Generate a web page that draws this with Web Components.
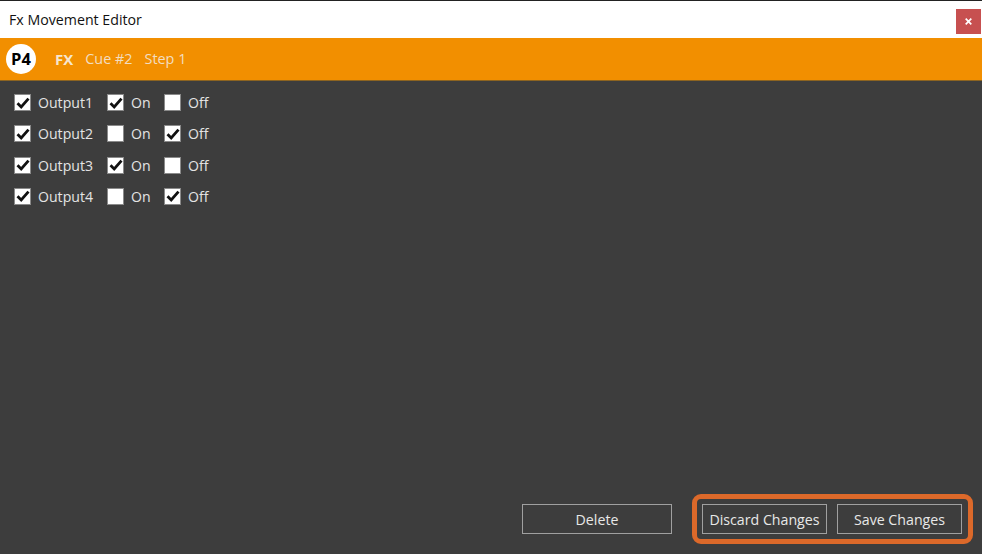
<!DOCTYPE html>
<html>
<head>
<meta charset="utf-8">
<title>Fx Movement Editor</title>
<style>
  html, body { margin: 0; height: 100%; overflow: hidden; }
  body { font-family: "Open Sans", "Noto Sans", sans-serif; font-size: 14.2px; }
</style>
</head>
<body>
<fx-window>
  <title-bar slot="title">Fx Movement Editor</title-bar>
  <crumb-bar slot="crumbs" badge="P4">
    <b>FX</b><span>Cue #2</span><span>Step 1</span>
  </crumb-bar>
  <output-row name="Output1" on></output-row>
  <output-row name="Output2"></output-row>
  <output-row name="Output3" on></output-row>
  <output-row name="Output4"></output-row>
  <flat-button slot="actions" style="--w:150px">Delete</flat-button>
  <mark-box slot="actions">
    <flat-button style="--w:125px">Discard Changes</flat-button>
    <flat-button style="--w:125px">Save Changes</flat-button>
  </mark-box>
</fx-window>

<script>
class FxWindow extends HTMLElement {
  constructor() {
    super();
    this.attachShadow({ mode: 'open' }).innerHTML = `
      <style>
        :host {
          display: flex;
          flex-direction: column;
          height: 554px;
          background: #3d3d3d;
        }
        .rows {
          flex: 1;
          display: flex;
          flex-direction: column;
          gap: 9.33px;
          padding: 10.5px 0 0 14px;
        }
        .actions {
          display: flex;
          justify-content: flex-end;
          align-items: center;
          gap: 20px;
          padding: 0 9px 10px 0;
        }
      </style>
      <slot name="title"></slot>
      <slot name="crumbs"></slot>
      <div class="rows"><slot></slot></div>
      <div class="actions"><slot name="actions"></slot></div>
    `;
  }
}

class TitleBar extends HTMLElement {
  constructor() {
    super();
    this.attachShadow({ mode: 'open' }).innerHTML = `
      <style>
        :host {
          display: flex;
          align-items: center;
          justify-content: space-between;
          box-sizing: border-box;
          height: 38px;
          padding: 0 1px 0 9px;
          background: #fff;
          border-top: 1px solid #222;
          color: #111;
          font-size: 14.2px;
        }
        .close {
          display: flex;
          align-items: center;
          justify-content: center;
          width: 25px;
          height: 25px;
          margin-top: 4px;
          background: #c75050;
        }
      </style>
      <span><slot></slot></span>
      <div class="close">
        <svg width="7" height="7" viewBox="0 0 7 7"><path d="M.7.7l5.6 5.6M6.3.7L.7 6.300" stroke="#fff" stroke-width="1.700" fill="none"/></svg>
      </div>
    `;
  }
}

class CrumbBar extends HTMLElement {
  constructor() {
    super();
    this.attachShadow({ mode: 'open' }).innerHTML = `
      <style>
        :host {
          display: flex;
          align-items: center;
          box-sizing: border-box;
          height: 43px;
          padding: 0 0 1px 6px;
          background: #f28f00;
          border-bottom: 1px solid #8d6420;
          color: #f2ddc0;
          font-size: 14.4px;
        }
        .badge {
          display: flex;
          align-items: center;
          justify-content: center;
          width: 30px;
          height: 30px;
          margin-right: 19px;
          border-radius: 50%;
          background: #fff;
          color: #000;
          font-weight: 700;
          font-size: 16.500px;
        }
        .crumbs { display: flex; gap: 12px; padding-top: 1px; }
        ::slotted(b) { color: #f6e6d0; font-size: 15px; line-height: 20px; }
      </style>
      <div class="badge">${this.getAttribute('badge')}</div>
      <div class="crumbs"><slot></slot></div>
    `;
  }
}

class CheckItem extends HTMLElement {
  constructor() {
    super();
    const tick = this.hasAttribute('checked')
      ? '<svg width="14" height="14" viewBox="0 0 14 14"><path d="M1.500 7.200l3.700 3.700L12.500 2.600" stroke="#111" stroke-width="2.800" fill="none"/></svg>'
      : '';
    this.attachShadow({ mode: 'open' }).innerHTML = `
      <style>
        :host {
          display: flex;
          align-items: center;
          gap: 7px;
          color: #e4e4e4;
          font-size: 14.1px;
          width: var(--w);
        }
        .box {
          display: flex;
          align-items: center;
          justify-content: center;
          box-sizing: border-box;
          flex: none;
          width: 17px;
          height: 17px;
          background: #fff;
          border: 1.500px solid #8a8a8a;
        }
      </style>
      <div class="box">${tick}</div>
      <span><slot></slot></span>
    `;
  }
}

class OutputRow extends HTMLElement {
  constructor() {
    super();
    const on = this.hasAttribute('on');
    this.attachShadow({ mode: 'open' }).innerHTML = `
      <style>
        :host { display: flex; align-items: center; height: 22px; }
      </style>
      <check-item checked style="--w:93px">${this.getAttribute('name')}</check-item>
      <check-item ${on ? 'checked' : ''} style="--w:57px">On</check-item>
      <check-item ${on ? '' : 'checked'} style="--w:60px">Off</check-item>
    `;
  }
}

class FlatButton extends HTMLElement {
  constructor() {
    super();
    this.attachShadow({ mode: 'open' }).innerHTML = `
      <style>
        :host {
          display: flex;
          align-items: center;
          justify-content: center;
          box-sizing: border-box;
          width: var(--w);
          height: 30px;
          border: 1px solid #a0a0a0;
          color: #e8e8e8;
          font-size: 14.2px;
        }
      </style>
      <slot></slot>
    `;
  }
}

class MarkBox extends HTMLElement {
  constructor() {
    super();
    this.attachShadow({ mode: 'open' }).innerHTML = `
      <style>
        :host {
          display: flex;
          gap: 10px;
          padding: 5px 6px 5px 5px;
          border: 5px solid #dc692a;
          border-radius: 9px;
        }
      </style>
      <slot></slot>
    `;
  }
}

customElements.define('fx-window', FxWindow);
customElements.define('title-bar', TitleBar);
customElements.define('crumb-bar', CrumbBar);
customElements.define('check-item', CheckItem);
customElements.define('output-row', OutputRow);
customElements.define('flat-button', FlatButton);
customElements.define('mark-box', MarkBox);
</script>
</body>
</html>
